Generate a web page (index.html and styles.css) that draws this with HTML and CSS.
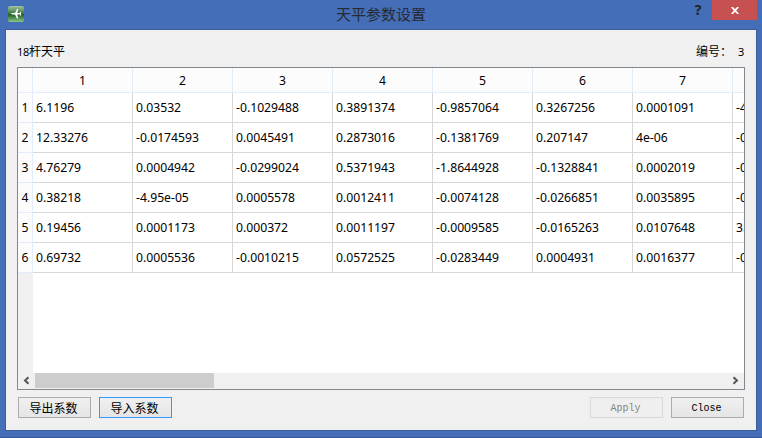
FILE: index.html
```html
<!DOCTYPE html>
<html lang="zh-CN">
<head>
<meta charset="utf-8">
<title>天平参数设置</title>
<link rel="stylesheet" href="styles.css">
</head>
<body>
<div class="window">
  <header class="titlebar">
    <svg class="app-icon" width="16" height="16" viewBox="0 0 16 16">
      <defs>
        <linearGradient id="g" x1="0" y1="0" x2="0" y2="1">
          <stop offset="0" stop-color="#a3c3a2"/>
          <stop offset=".45" stop-color="#3f7a45"/>
          <stop offset=".55" stop-color="#246029"/>
          <stop offset="1" stop-color="#8bc98a"/>
        </linearGradient>
      </defs>
      <rect width="16" height="16" rx="2" fill="url(#g)"/>
      <path d="M2.5 7.8 4.5 7H7L9 3H10.2L9.3 7H11.8L12.4 5.8H13.2L12.8 7.8 13.2 9.8H12.4L11.8 8.6H9.3L10.2 12.6H9L7 8.6H4.5Z" fill="#fff"/>
    </svg>
    <h1 class="title">天平参数设置</h1>
    <div class="controls">
      <span class="help">?</span>
      <span class="close">
        <svg width="8" height="7" viewBox="0 0 8 7"><path d="M.8 0 7.2 7M7.2 0 .8 7" stroke="#fff" stroke-width="1.8"/></svg>
      </span>
    </div>
  </header>
  <main class="client">
    <div class="info">
      <span><span class="num">18</span>杆天平</span>
      <span>编号：<span class="num value">3</span></span>
    </div>
    <section class="table-view">
      <div class="grid">
        <div class="row head"><span class="rh"></span><span>1</span><span>2</span><span>3</span><span>4</span><span>5</span><span>6</span><span>7</span><span></span></div>
        <div class="row"><span class="rh">1</span><span>6.1196</span><span>0.03532</span><span>-0.1029488</span><span>0.3891374</span><span>-0.9857064</span><span>0.3267256</span><span>0.0001091</span><span>-4</span></div>
        <div class="row"><span class="rh">2</span><span>12.33276</span><span>-0.0174593</span><span>0.0045491</span><span>0.2873016</span><span>-0.1381769</span><span>0.207147</span><span>4e-06</span><span>-0</span></div>
        <div class="row"><span class="rh">3</span><span>4.76279</span><span>0.0004942</span><span>-0.0299024</span><span>0.5371943</span><span>-1.8644928</span><span>-0.1328841</span><span>0.0002019</span><span>-0</span></div>
        <div class="row"><span class="rh">4</span><span>0.38218</span><span>-4.95e-05</span><span>0.0005578</span><span>0.0012411</span><span>-0.0074128</span><span>-0.0266851</span><span>0.0035895</span><span>-0</span></div>
        <div class="row"><span class="rh">5</span><span>0.19456</span><span>0.0001173</span><span>0.000372</span><span>0.0011197</span><span>-0.0009585</span><span>-0.0165263</span><span>0.0107648</span><span>3.</span></div>
        <div class="row"><span class="rh">6</span><span>0.69732</span><span>0.0005536</span><span>-0.0010215</span><span>0.0572525</span><span>-0.0283449</span><span>0.0004931</span><span>0.0016377</span><span>-0</span></div>
      </div>
      <div class="filler"></div>
      <div class="scrollbar">
        <svg width="17" height="16" viewBox="0 0 17 16"><path d="M10.5 4.2 7 7.5 10.5 10.8" fill="none" stroke="#555" stroke-width="2"/></svg>
        <div class="track"><div class="thumb"></div></div>
        <svg width="17" height="16" viewBox="0 0 17 16"><path d="M6.5 4.2 10 7.5 6.5 10.8" fill="none" stroke="#555" stroke-width="2"/></svg>
      </div>
    </section>
    <footer class="buttons">
      <button class="btn">导出系数</button>
      <button class="btn focused">导入系数</button>
      <span class="spacer"></span>
      <button class="btn latin" disabled>Apply</button>
      <button class="btn latin">Close</button>
    </footer>
  </main>
</div>
</body>
</html>
```
FILE: styles.css
```css
* { box-sizing: border-box; }
body { margin: 0; overflow: hidden; }
.window {
  width: 762px;
  height: 438px;
  display: flex;
  flex-direction: column;
  padding: 0 5px 6px;
  background: #446eb8;
  border-bottom: 1px solid #36589a;
  color: #000;
  font: 12px/16px "Noto Sans CJK SC", sans-serif;
}
.titlebar {
  height: 29px;
  flex: none;
  display: grid;
  grid-template-columns: 80px 1fr 80px;
  align-items: start;
}
.app-icon { margin: 6px 0 0 3px; }
.title {
  margin: 4px 0 0;
  text-align: center;
  font: 15px/20px "Noto Sans CJK SC", sans-serif;
  color: #262b35;
}
.controls { display: flex; justify-content: flex-end; }
.help {
  width: 12px;
  margin-right: 8px;
  text-align: center;
  font: bold 14px/20px "Noto Sans", sans-serif;
  color: #222;
}
.close {
  width: 45px;
  height: 20px;
  display: flex;
  align-items: center;
  justify-content: center;
  background: #c75050;
}
.client {
  flex: 1;
  min-height: 0;
  display: flex;
  flex-direction: column;
  padding: 0 11px 12px;
  border: 1px solid #3a5d9c;
  background: #f0f0f0;
}
.info {
  height: 37px;
  flex: none;
  display: flex;
  justify-content: space-between;
  align-items: center;
  padding: 5px 1px 0 0;
}
.num { font-family: "Noto Sans", sans-serif; font-size: 11px; letter-spacing: -.3px; }
.value { padding-left: 6px; }
.table-view {
  flex: 1;
  min-height: 0;
  display: flex;
  flex-direction: column;
  border: 1px solid #828790;
  background: #fff;
  overflow: hidden;
  font: 12.2px/16px "Noto Sans", sans-serif;
}
.row {
  display: grid;
  grid-template-columns: 15px repeat(8, 100px);
  height: 30px;
}
.row span {
  padding: 7px 0 0 3px;
  border-right: 1px solid #d8d8d8;
  border-bottom: 1px solid #d8d8d8;
  overflow: hidden;
  white-space: nowrap;
}
.head { height: 25px; }
.head span, .row .rh {
  padding-left: 0;
  text-align: center;
  background: #fcfcfc;
  border-color: #e2ecfc;
}
.head span { padding-top: 5px; }
.filler { flex: 1; width: 15px; background: #f0f0f0; }
.scrollbar { height: 16px; flex: none; display: flex; background: #f0f0f0; }
.scrollbar svg { flex: none; }
.track { flex: 1; }
.thumb { width: 179px; height: 15px; background: #cdcdcd; }
.buttons { display: flex; gap: 8px; padding: 7px 1px 0; }
.buttons .spacer { flex: 1; }
.btn {
  width: 73px;
  height: 21px;
  padding: 0 2px 1px 0;
  border: 1px solid #acacac;
  background: linear-gradient(#f0f0f0, #e5e5e5);
  color: #000;
  font: 12px/17px "Noto Sans CJK SC", sans-serif;
}
.btn.latin { padding: 1px 2px 0 0; font: 10px/17px "Liberation Mono", monospace; }
.focused { border-color: #3399ff; }
.btn:disabled { border-color: #d9d9d9; background: #efefef; color: #838383; }
```
